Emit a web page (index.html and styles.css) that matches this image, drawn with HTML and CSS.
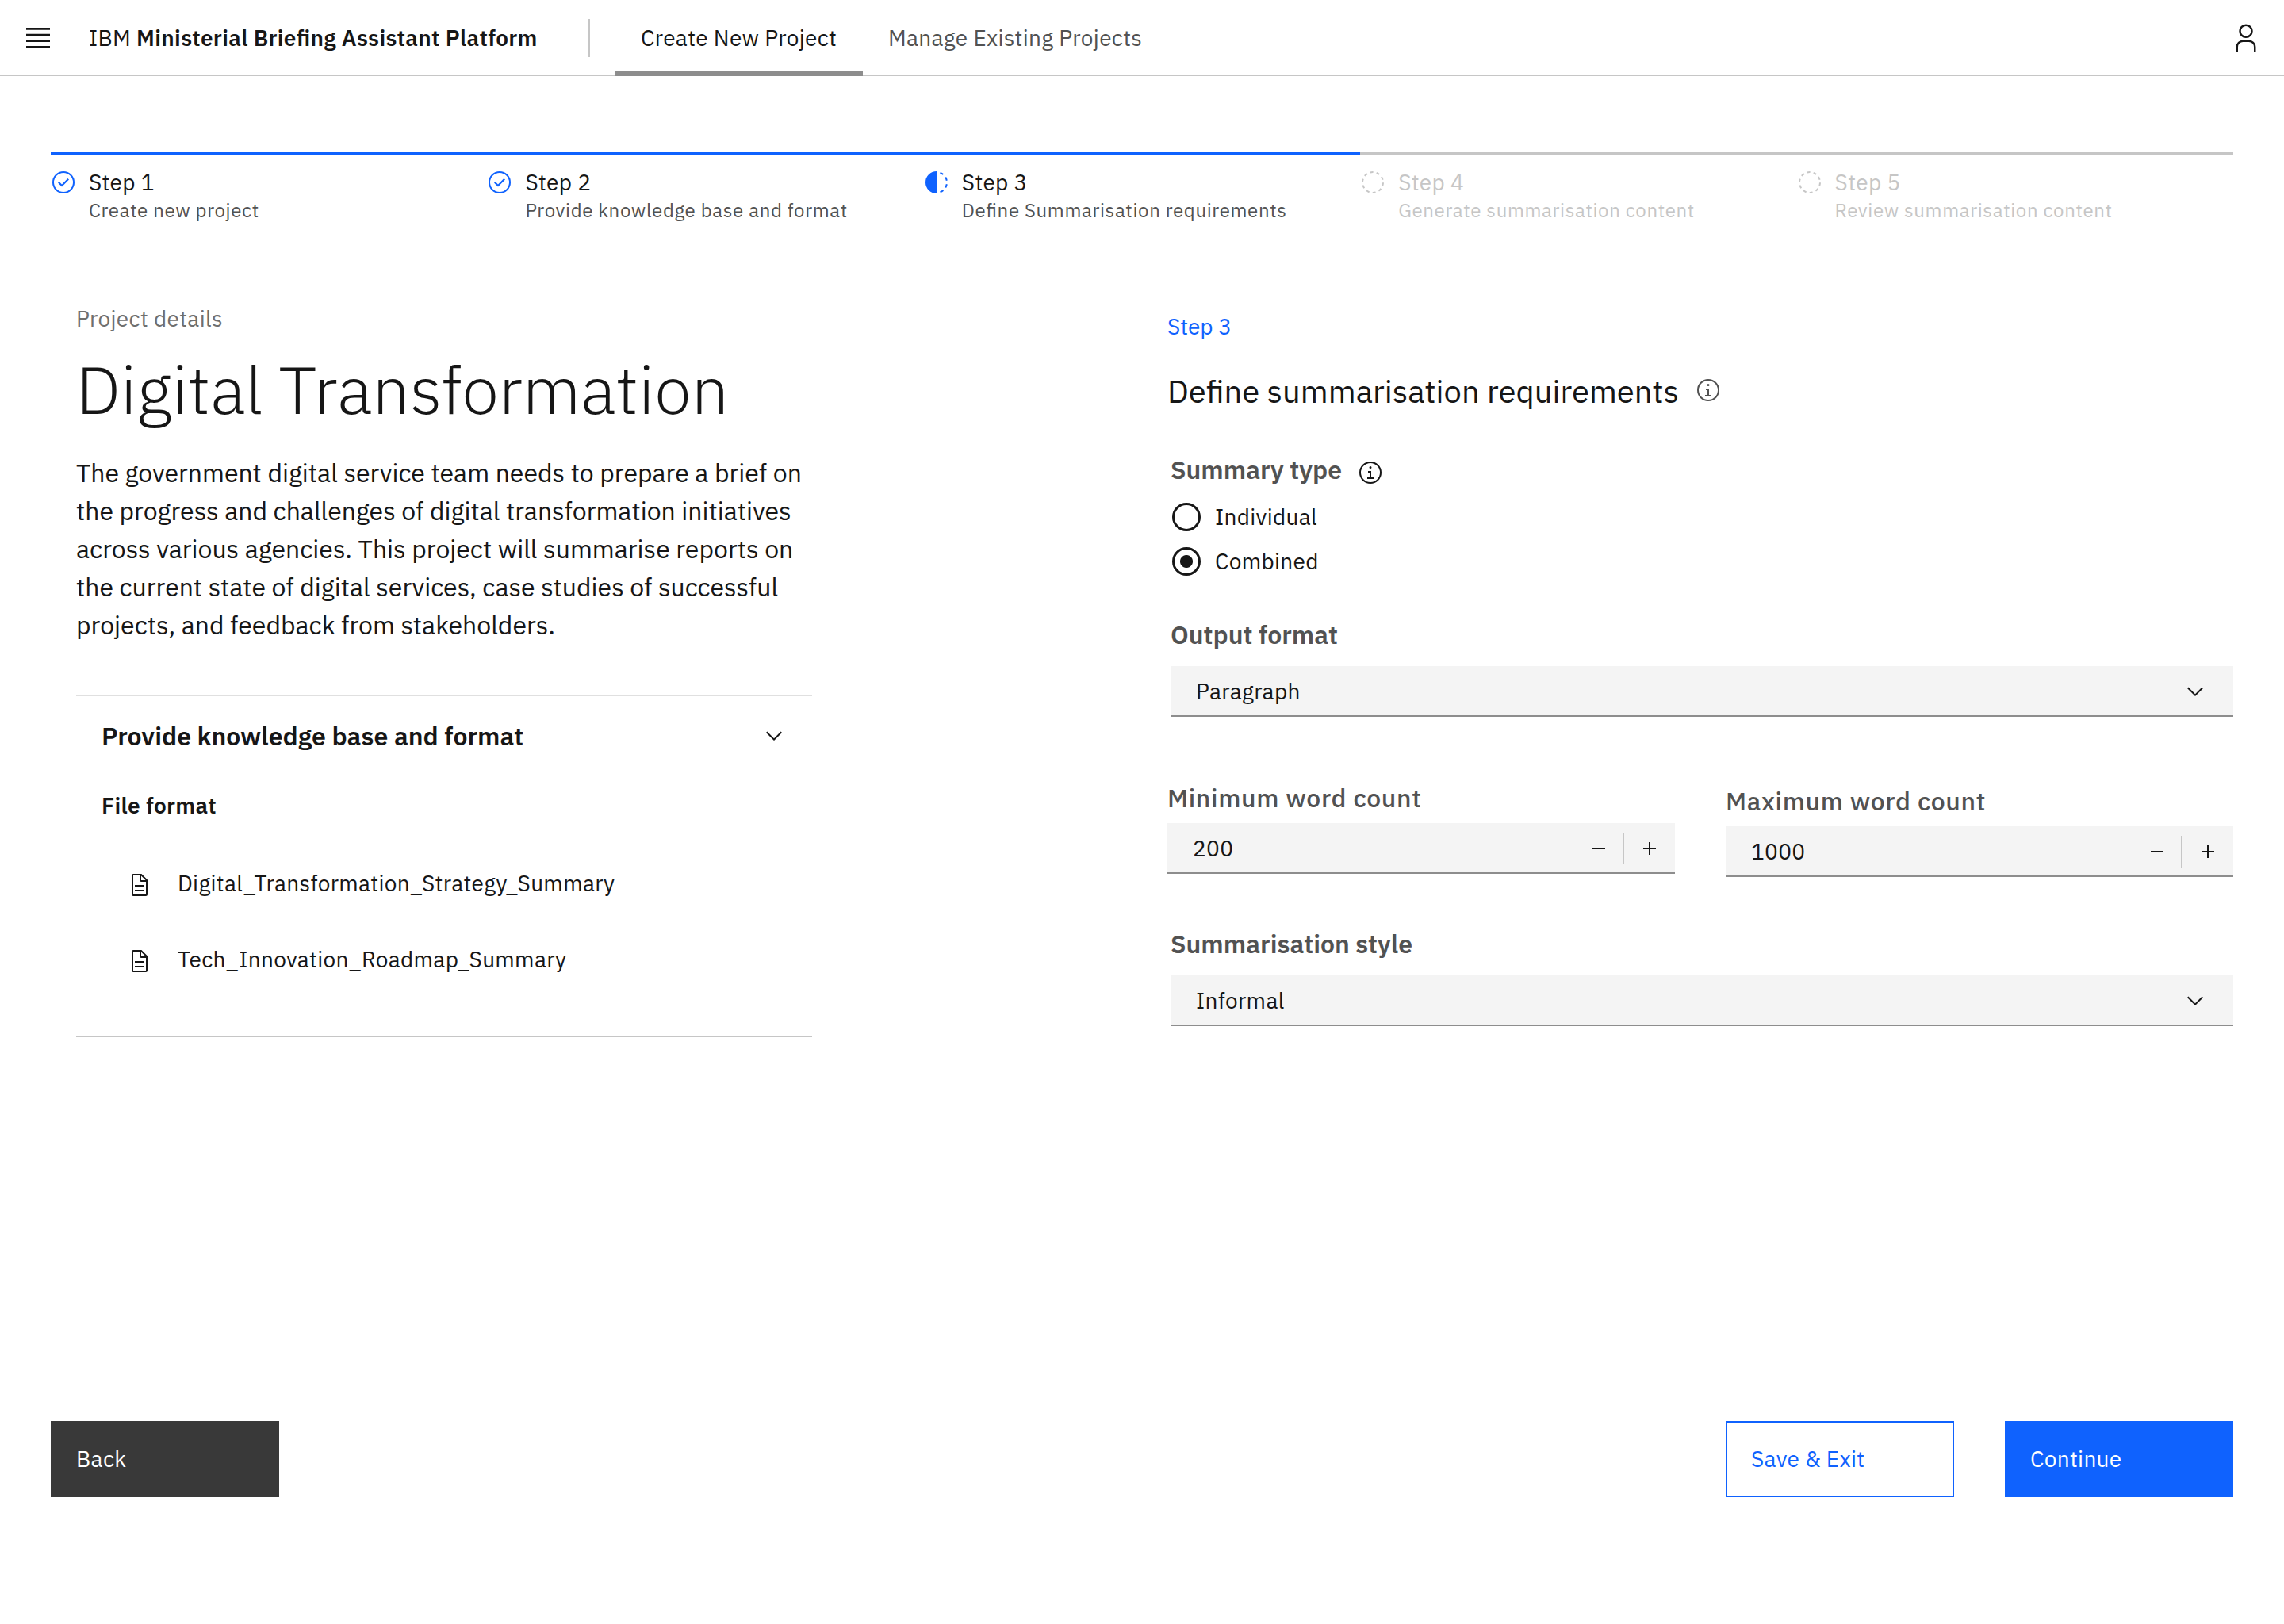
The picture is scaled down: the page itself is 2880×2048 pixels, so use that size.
FILE: index.html
```html
<!DOCTYPE html>
<html lang="en">
<head>
<meta charset="utf-8">
<title>Ministerial Briefing Assistant Platform</title>
<link rel="stylesheet" href="styles.css">
</head>
<body>
<svg class="sprite" width="0" height="0" aria-hidden="true">
  <symbol id="chevron" viewBox="0 0 32 32"><path d="M16 22L6 12l1.4-1.4 8.6 8.6 8.6-8.6L26 12z"/></symbol>
  <symbol id="info" viewBox="0 0 32 32"><path d="M17 22v-8h-4v2h2v6h-3v2h8v-2zM16 8a1.5 1.5 0 1 0 1.5 1.5A1.5 1.5 0 0 0 16 8z"/><path d="M16 30A14 14 0 1 1 30 16 14 14 0 0 1 16 30zm0-26A12 12 0 1 0 28 16 12 12 0 0 0 16 4z"/></symbol>
  <symbol id="document" viewBox="0 0 32 32"><path d="M25.7 9.3l-7-7C18.5 2.1 18.3 2 18 2H8C6.9 2 6 2.9 6 4v24c0 1.1.9 2 2 2h16c1.1 0 2-.9 2-2V10c0-.3-.1-.5-.3-.7zM18 4.4l5.6 5.6H18V4.4zM24 28H8V4h8v6c0 1.1.9 2 2 2h6v16z"/><path d="M10 22h12v2H10zM10 16h12v2H10z"/></symbol>
  <symbol id="done" viewBox="0 0 32 32"><path d="M14 21.4l-5-5L10.6 15l3.4 3.4 7.4-7.4 1.6 1.4z"/><path d="M16 2a14 14 0 1 0 14 14A14 14 0 0 0 16 2zm0 26a12 12 0 1 1 12-12 12 12 0 0 1-12 12z"/></symbol>
  <symbol id="current" viewBox="0 0 32 32"><path d="M23.764 6.86l1.285-1.532a13.976 13.976 0 0 0-4.182-2.441l-.683 1.878a11.973 11.973 0 0 1 3.58 2.095zM27.81 14l1.968-.413A13.889 13.889 0 0 0 28.141 9.1l-1.732 1A12.1 12.1 0 0 1 27.81 14zM20.184 27.235l.683 1.878a13.976 13.976 0 0 0 4.182-2.441l-1.285-1.532a11.973 11.973 0 0 1-3.58 2.095zM26.409 21.9l1.732 1a13.889 13.889 0 0 0 1.637-4.487L27.81 18a12.1 12.1 0 0 1-1.401 3.9zM16 30V2a14 14 0 0 0 0 28z"/></symbol>
  <symbol id="todo" viewBox="0 0 32 32"><circle cx="16" cy="16" r="13" fill="none" stroke="currentColor" stroke-width="2" stroke-dasharray="4 4.168" stroke-dashoffset="-.27"/></symbol>
</svg>

<header class="header">
  <svg class="menu-icon" viewBox="0 0 30 26"><path d="M0 0h30v2.8H0zM0 7.7h30v2.8H0zM0 15.3h30v2.8H0zM0 23h30v2.8H0z"/></svg>
  <div class="brand">IBM <strong class="brand-name">Ministerial Briefing Assistant Platform</strong></div>
  <nav class="nav">
    <a class="nav-item active">Create New Project</a>
    <a class="nav-item">Manage Existing Projects</a>
  </nav>
  <svg class="user-icon" viewBox="0 0 32 32"><path d="M16 4a5 5 0 1 1-5 5 5 5 0 0 1 5-5m0-2a7 7 0 1 0 7 7 7 7 0 0 0-7-7zM26 30h-2v-5a5 5 0 0 0-5-5h-6a5 5 0 0 0-5 5v5H6v-5a7 7 0 0 1 7-7h6a7 7 0 0 1 7 7z"/></svg>
</header>

<ol class="progress">
  <li class="step complete"><svg class="icon"><use href="#done"/></svg><div><p>Step 1</p><p class="step-text">Create new project</p></div></li>
  <li class="step complete"><svg class="icon"><use href="#done"/></svg><div><p>Step 2</p><p class="step-text">Provide knowledge base and format</p></div></li>
  <li class="step complete"><svg class="icon"><use href="#current"/></svg><div><p>Step 3</p><p class="step-text">Define Summarisation requirements</p></div></li>
  <li class="step"><svg class="icon"><use href="#todo"/></svg><div><p>Step 4</p><p class="step-text">Generate summarisation content</p></div></li>
  <li class="step"><svg class="icon"><use href="#todo"/></svg><div><p>Step 5</p><p class="step-text">Review summarisation content</p></div></li>
</ol>

<main class="main">
  <section class="details">
    <p class="eyebrow">Project details</p>
    <h1 class="title">Digital Transformation</h1>
    <p class="description">The government digital service team needs to prepare a brief on<br>the progress and challenges of digital transformation initiatives<br>across various agencies. This project will summarise reports on<br>the current state of digital services, case studies of successful<br>projects, and feedback from stakeholders.</p>
    <div class="accordion">
      <div class="accordion-head"><h2 class="accordion-title">Provide knowledge base and format</h2><svg class="icon"><use href="#chevron"/></svg></div>
      <h3 class="files-title">File format</h3>
      <ul class="files">
        <li class="file"><svg class="icon"><use href="#document"/></svg><span class="file-name">Digital_Transformation_Strategy_Summary</span></li>
        <li class="file"><svg class="icon"><use href="#document"/></svg><span class="file-name">Tech_Innovation_Roadmap_Summary</span></li>
      </ul>
    </div>
  </section>

  <section class="form">
    <p class="form-step">Step 3</p>
    <div class="form-heading"><h2 class="form-title">Define summarisation requirements</h2><svg class="icon muted"><use href="#info"/></svg></div>
    <div class="group">
      <div class="legend"><span class="label">Summary type</span><svg class="icon"><use href="#info"/></svg></div>
      <div class="radio"><span class="dot"></span><span>Individual</span></div>
      <div class="radio"><span class="dot checked"></span><span>Combined</span></div>
    </div>
    <div class="field">
      <div class="label">Output format</div>
      <div class="select"><span>Paragraph</span><svg class="icon"><use href="#chevron"/></svg></div>
    </div>
    <div class="counts">
      <div class="count">
        <div class="count-label">Minimum word count</div>
        <div class="number"><span class="value">200</span><svg class="stepper" viewBox="0 0 16 16"><path d="M0 7h16v2H0z"/></svg><span class="rule"></span><svg class="stepper" viewBox="0 0 16 16"><path d="M7 0h2v7h7v2H9v7H7V9H0V7h7z"/></svg></div>
      </div>
      <div class="count lowered">
        <div class="count-label">Maximum word count</div>
        <div class="number"><span class="value">1000</span><svg class="stepper" viewBox="0 0 16 16"><path d="M0 7h16v2H0z"/></svg><span class="rule"></span><svg class="stepper" viewBox="0 0 16 16"><path d="M7 0h2v7h7v2H9v7H7V9H0V7h7z"/></svg></div>
      </div>
    </div>
    <div class="field style-field">
      <div class="label">Summarisation style</div>
      <div class="select"><span>Informal</span><svg class="icon"><use href="#chevron"/></svg></div>
    </div>
  </section>
</main>

<footer class="actions">
  <button class="btn secondary">Back</button>
  <button class="btn outline">Save &amp; Exit</button>
  <button class="btn primary">Continue</button>
</footer>
</body>
</html>
```
FILE: styles.css
```css
* { box-sizing: border-box; margin: 0; padding: 0; }

body {
  width: 2880px;
  height: 2048px;
  background: #fff;
  color: #161616;
  font-family: "IBM Plex Sans", Roboto, "Liberation Sans", sans-serif;
  font-size: 28px;
  line-height: 36px;
  letter-spacing: 0.32px;
  font-feature-settings: "liga" 1;
}

ol, ul { list-style: none; }
svg { display: block; flex: none; fill: currentColor; }
.sprite { position: absolute; }
.icon { width: 32px; height: 32px; }

/* Header */
.header {
  display: flex;
  align-items: center;
  height: 96px;
  padding: 0 28px 0 33px;
  box-shadow: inset 0 -2px #c6c6c6;
}
.menu-icon { width: 30px; height: 26px; }
.brand { width: 632px; margin-left: 49px; white-space: nowrap; }
.brand-name { font-weight: 600; }
.nav { display: flex; height: 96px; align-items: center; }
.nav::before { content: ""; width: 2px; height: 48px; margin: 0 32px 0 -2px; background: #c6c6c6; }
.nav-item { display: flex; align-items: center; height: 96px; padding: 0 32px; color: #525252; }
.nav-item.active { width: 312px; color: #161616; box-shadow: inset 0 -6px #8d8d8d; }
.user-icon { width: 40px; height: 40px; margin-left: auto; }

/* Progress indicator */
.progress { display: grid; grid-template-columns: repeat(5, 1fr); margin: 96px 64px 0; }
.step { display: flex; gap: 16px; height: 90px; padding-top: 16px; border-top: 4px solid #c6c6c6; color: #c6c6c6; }
.step .icon { margin-top: 2px; }
.step-text { margin-top: 1px; font-size: 24px; line-height: 32px; letter-spacing: 0.64px; }
.complete { border-color: #0f62fe; color: #161616; }
.complete .icon { color: #0f62fe; }
.complete .step-text { color: #525252; }

/* Page columns */
.main { display: flex; justify-content: space-between; height: 1510px; padding: 0 64px 0 96px; }
.details { width: 928px; padding-top: 102px; }
.eyebrow { color: #6f6f6f; }
.title { margin-top: 21px; font-size: 84px; font-weight: 300; line-height: 100px; letter-spacing: 0; }
.description { margin-top: 31px; font-size: 32px; line-height: 48px; letter-spacing: 0; white-space: nowrap; }

.accordion { margin-top: 64px; padding: 26px 32px 46px; border-top: 2px solid #e0e0e0; border-bottom: 2px solid #c6c6c6; }
.accordion-head { display: flex; justify-content: space-between; align-items: center; height: 48px; }
.accordion-title { font-size: 32px; font-weight: 600; line-height: 48px; letter-spacing: 0; }
.files-title { margin: 46px 0 34px; font-size: 28px; font-weight: 600; }
.file { display: flex; align-items: center; gap: 32px; height: 96px; padding-left: 32px; }
.file-name { padding-bottom: 4px; }

/* Form */
.form { width: 1344px; padding-top: 112px; }
.form-step { color: #0f62fe; letter-spacing: 0; }
.form-heading { display: flex; gap: 21px; margin-top: 39px; }
.form-title { font-size: 40px; font-weight: 400; line-height: 48px; letter-spacing: 0; }
.form-heading .icon { margin-top: 7px; }
.muted { color: #525252; }
.group { margin: 55px 0 0 4px; }
.legend { display: flex; gap: 20px; height: 40px; margin-bottom: 22px; }
.legend .icon { margin-top: 8px; }
.label { color: #525252; font-size: 32px; font-weight: 600; line-height: 40px; letter-spacing: 0; }
.radio { display: flex; align-items: center; gap: 18px; height: 36px; margin-left: 2px; }
.radio + .radio { margin-top: 20px; }
.dot { width: 36px; height: 36px; border: 3px solid #161616; border-radius: 50%; }
.dot.checked { background: radial-gradient(circle, #161616 7.5px, transparent 8.5px); }
.field { margin: 54px 0 0 4px; }
.select, .number { display: flex; align-items: center; height: 64px; padding: 2px 32px 0; background: #f4f4f4; border-bottom: 2px solid #8d8d8d; }
.select { justify-content: space-between; margin-top: 20px; }
.counts { display: flex; gap: 64px; margin-top: 82px; }
.count { width: 640px; }
.lowered { padding-top: 4px; }
.count-label { color: #525252; font-size: 32px; font-weight: 500; line-height: 40px; letter-spacing: 0.64px; }
.number { margin-top: 12px; padding-right: 24px; }
.value { margin-right: auto; }
.stepper { width: 16px; height: 16px; }
.rule { width: 2px; height: 40px; margin: 0 24px 0 22px; background: #c6c6c6; }
.style-field { margin-top: 64px; }

/* Actions */
.actions { display: flex; gap: 64px; padding: 0 64px; }
.btn { width: 288px; height: 96px; padding-left: 32px; border: 0; font: inherit; letter-spacing: inherit; text-align: left; }
.secondary { margin-right: auto; background: #393939; color: #fff; }
.outline { padding-left: 30px; border: 2px solid #0f62fe; background: #fff; color: #0f62fe; }
.primary { background: #0f62fe; color: #fff; }
```
